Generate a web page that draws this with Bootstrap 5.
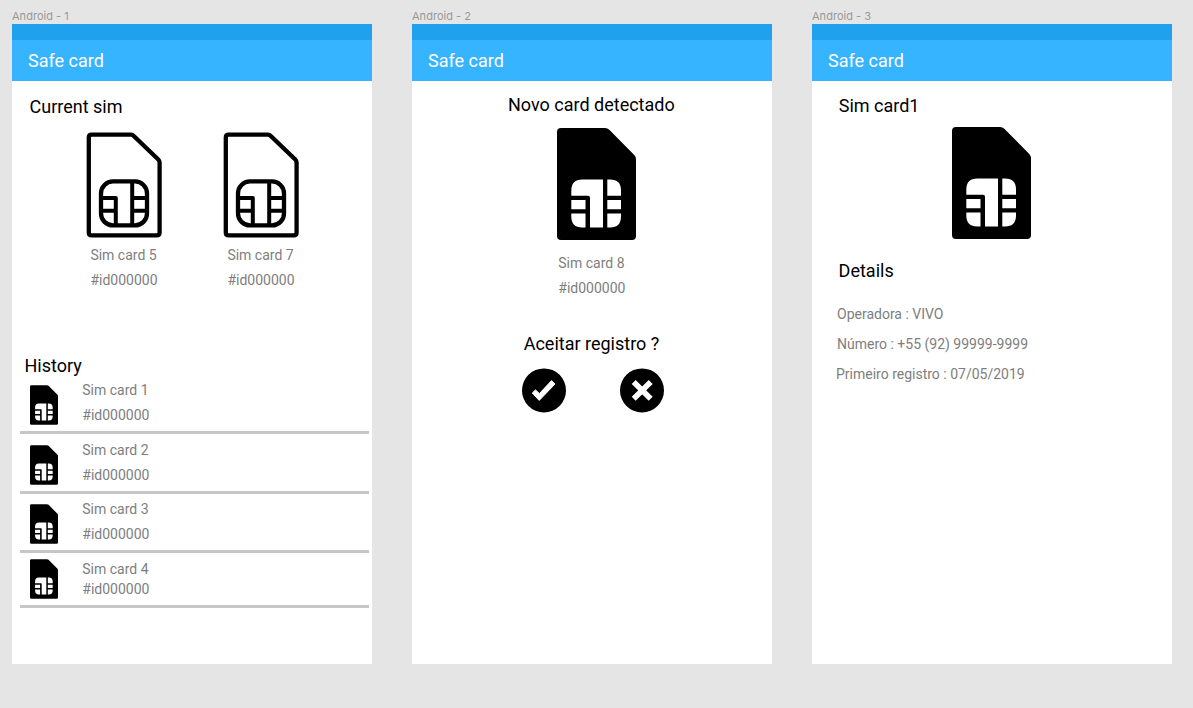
<!DOCTYPE html>
<html lang="pt">
<head>
<meta charset="utf-8">
<meta name="viewport" content="width=device-width, initial-scale=1">
<title>Safe card</title>
<link href="https://cdn.jsdelivr.net/npm/bootstrap@5.3.0/dist/css/bootstrap.min.css" rel="stylesheet">
<style>
  body { background: #e5e5e5; font-family: Roboto, sans-serif; height: 708px; overflow: hidden; }
  svg { display: block; flex: none; }
  .boards { gap: 40px; padding: 8px 12px 0; }
  .board { width: 360px; }
  .board-name { font: 11px/16px Inter, sans-serif; color: #999; height: 16px; letter-spacing: .03px; }
  .screen { height: 640px; }
  .status-strip { height: 16px; background: #20a1ed; }
  .app-bar { height: 41px; background: #36b4ff; padding: 11px 16px 0; }
  .title { font-size: 18px; line-height: 20px; font-weight: 400; margin: 0; white-space: nowrap; color: #000; }
  .app-bar .title { color: #fff; }
  .caption { font-size: 14px; line-height: 25px; color: #7e7e7e; white-space: nowrap; }
  .slots { padding: 15px 0 0 74px; gap: 61px; height: 239px; }
  .slots .caption { margin: 5px 0 0 4.400px; }
  .history { margin: 0 3px 0 8px; padding: 0; list-style: none; }
  .history li { height: 60px; border-bottom: 3px solid #c6c6c6; padding: 4px 0 0 10px; gap: 24.300px; }
  .history li svg { margin-top: 7px; }
  .history li.row-c { height: 59px; padding-top: 3px; }
  .history li.row-d { height: 55px; padding-top: 6px; }
  .history li.row-d svg { margin-top: 0; }
  .history li.row-d .caption { line-height: 20px; }
  .details { padding: 18px 0 0 25px; }
  .details .caption { line-height: 30px; }
  .round { width: 44px; height: 44px; border: 0; padding: 0; background: none; }
</style>
</head>
<body>
<svg width="0" height="0" class="position-absolute" aria-hidden="true">
  <symbol id="sim-solid" viewBox="0 0 79 112">
    <path d="M4 0H48Q50.500 0 52.300 1.800L77.500 27.200Q79 28.700 79 31V108Q79 112 75 112H4Q0 112 0 108V4Q0 0 4 0Z"/>
    <path fill="#fff" transform="translate(0 .5)" d="M25.300 51H46V99H33V69.200Q33 67.200 31 67.200H14.300V62Q14.300 51 25.300 51ZM50.300 51H53Q64 51 64 62V67.200H50.300ZM14.300 71.500H28.500V80.800H14.300ZM50.300 71.500H64V80.800H50.300ZM14.300 85H28.500V99H25.300Q14.300 99 14.300 88ZM50.300 85H64V88Q64 99 53 99H50.300Z"/>
  </symbol>
  <symbol id="sim-line" viewBox="0 0 76 106">
    <g fill="none" stroke="#000" stroke-width="4.300" stroke-linejoin="round">
      <path d="M5 2.700H45Q46.600 2.700 47.800 3.900L72.300 27.500Q73.600 28.800 73.600 30.500V100.500Q73.600 103.300 70.800 103.300H5.600Q2.800 103.300 2.800 100.500V5.500Q2.800 2.700 5.600 2.700Z"/>
      <rect x="15" y="49.400" width="46" height="44" rx="12"/>
      <path stroke-width="4" d="M46.200 49V93M15 66H29.800V93M15 78.700H29.800M46.200 66H61M46.200 78.700H61"/>
    </g>
  </symbol>
</svg>

<main class="boards d-flex">
  <section class="board">
    <div class="board-name">Android - 1</div>
    <div class="screen bg-white">
      <div class="status-strip"></div>
      <header class="app-bar"><h1 class="title">Safe card</h1></header>
      <h2 class="title" style="padding:16px 0 0 17.500px">Current sim</h2>
      <div class="slots d-flex">
        <div><svg width="76" height="106"><use href="#sim-line"/></svg><div class="caption">Sim card 5<br>#id000000</div></div>
        <div><svg width="76" height="106"><use href="#sim-line"/></svg><div class="caption">Sim card 7<br>#id000000</div></div>
      </div>
      <h2 class="title" style="padding-left:12.500px;margin-bottom:-2px">History</h2>
      <ul class="history">
        <li class="d-flex"><svg width="28" height="40"><use href="#sim-solid"/></svg><div class="caption">Sim card 1<br>#id000000</div></li>
        <li class="d-flex"><svg width="28" height="40"><use href="#sim-solid"/></svg><div class="caption">Sim card 2<br>#id000000</div></li>
        <li class="d-flex row-c"><svg width="28" height="40"><use href="#sim-solid"/></svg><div class="caption">Sim card 3<br>#id000000</div></li>
        <li class="d-flex row-d"><svg width="28" height="40"><use href="#sim-solid"/></svg><div class="caption">Sim card 4<br>#id000000</div></li>
      </ul>
    </div>
  </section>

  <section class="board">
    <div class="board-name">Android - 2</div>
    <div class="screen bg-white">
      <div class="status-strip"></div>
      <header class="app-bar"><h1 class="title">Safe card</h1></header>
      <h2 class="title" style="padding:14px 0 0 96px">Novo card detectado</h2>
      <svg width="79" height="112" style="margin:13px 0 0 145px"><use href="#sim-solid"/></svg>
      <div class="caption" style="padding:11px 0 0 146.300px">Sim card 8<br>#id000000</div>
      <h2 class="title" style="padding:33px 0 0 111.700px">Aceitar registro ?</h2>
      <div class="d-flex" style="gap:54px;padding:14px 0 0 110px">
        <button class="round" aria-label="Sim"><svg width="44" height="45" viewBox="0 0 44 45"><circle cx="22" cy="22.400" r="22"/><path fill="#fff" stroke="#fff" stroke-linejoin="round" d="M10.300 25L13.500 21.900L17.400 25.600L29.600 12.600L33 16L17.200 32.400Z"/></svg></button>
        <button class="round" aria-label="Não"><svg width="44" height="45" viewBox="0 0 44 45"><circle cx="22" cy="22.400" r="22"/><path stroke="#fff" stroke-width="5.600" d="M13.700 14L30.700 30.800M30.700 14L13.700 30.800"/></svg></button>
      </div>
    </div>
  </section>

  <section class="board">
    <div class="board-name">Android - 3</div>
    <div class="screen bg-white">
      <div class="status-strip"></div>
      <header class="app-bar"><h1 class="title">Safe card</h1></header>
      <h2 class="title" style="padding:15px 0 0 26.700px">Sim card1</h2>
      <svg width="79" height="112" style="margin:11px 0 0 140px"><use href="#sim-solid"/></svg>
      <h2 class="title" style="padding:22px 0 0 26.600px">Details</h2>
      <div class="details">
        <div class="caption">Operadora : VIVO</div>
        <div class="caption">Número : +55 (92) 99999-9999</div>
        <div class="caption" style="margin-left:-1px">Primeiro registro : 07/05/2019</div>
      </div>
    </div>
  </section>
</main>
<script src="https://cdn.jsdelivr.net/npm/bootstrap@5.3.0/dist/js/bootstrap.bundle.min.js"></script>
</body>
</html>
